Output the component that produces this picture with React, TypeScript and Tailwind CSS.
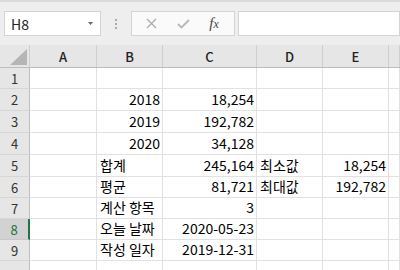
const cols = [
  { key: 'A', w: 'w-[67px]' },
  { key: 'B', w: 'w-[66px]' },
  { key: 'C', w: 'w-[94px]' },
  { key: 'D', w: 'w-[66px]' },
  { key: 'E', w: 'w-[66px]' },
  { key: 'F', w: 'flex-1' },
];

type Cell = { v: string; right?: boolean };

const rows: { n: number; h: string; cells: Record<string, Cell> }[] = [
  { n: 1, h: 'h-[21px]', cells: {} },
  { n: 2, h: 'h-[22px]', cells: { B: { v: '2018', right: true }, C: { v: '18,254', right: true } } },
  { n: 3, h: 'h-[22px]', cells: { B: { v: '2019', right: true }, C: { v: '192,782', right: true } } },
  { n: 4, h: 'h-[22px]', cells: { B: { v: '2020', right: true }, C: { v: '34,128', right: true } } },
  {
    n: 5,
    h: 'h-[22px]',
    cells: { B: { v: '합계' }, C: { v: '245,164', right: true }, D: { v: '최소값' }, E: { v: '18,254', right: true } },
  },
  {
    n: 6,
    h: 'h-[21px]',
    cells: { B: { v: '평균' }, C: { v: '81,721', right: true }, D: { v: '최대값' }, E: { v: '192,782', right: true } },
  },
  { n: 7, h: 'h-[21px]', cells: { B: { v: '계산 항목' }, C: { v: '3', right: true } } },
  { n: 8, h: 'h-[21px]', cells: { B: { v: '오늘 날짜' }, C: { v: '2020-05-23', right: true } } },
  { n: 9, h: 'h-[21px]', cells: { B: { v: '작성 일자' }, C: { v: '2019-12-31', right: true } } },
  { n: 10, h: 'h-[21px]', cells: {} },
];

const font = "font-['Noto_Sans_CJK_KR','Noto_Sans',sans-serif]";

export default function App() {
  return (
    <div className={`flex h-[270px] w-[400px] flex-col overflow-hidden bg-white text-[#222] ${font}`}>
      <FormulaBar />
      <div className="flex h-[23px] shrink-0 border-b border-[#bdbdbd] bg-[#e6e6e6]">
        <div className="flex w-[30px] shrink-0 items-end justify-end border-r border-[#cfcfcf] pb-[2px] pr-[2px]">
          <svg width="17" height="16" viewBox="0 0 17 16">
            <path d="M17 0 L17 16 L0 16 Z" fill="#b5b5b5" />
          </svg>
        </div>
        {cols.map((c) => (
          <div
            key={c.key}
            className={`${c.w} flex shrink-0 items-center justify-center border-r border-[#cfcfcf] text-[13px] font-medium leading-none text-[#222]`}
          >
            {c.key !== 'F' && c.key}
          </div>
        ))}
      </div>
      {rows.map((r) => {
        const active = r.n === 8;
        return (
          <div key={r.n} className={`flex ${r.h} shrink-0`}>
            <div
              className={[
                'flex w-[30px] shrink-0 items-center justify-center border-b text-[13px] leading-none',
                active
                  ? 'border-r-2 border-b-[#c8c8c8] border-r-[#217346] bg-[#d2d2d2] text-[#217346]'
                  : 'border-r border-b-[#d6d6d6] border-r-[#bdbdbd] bg-[#e6e6e6] text-[#333]',
              ].join(' ')}
            >
              {r.n < 10 && r.n}
            </div>
            {cols.map((c) => {
              const cell = r.cells[c.key];
              return (
                <div
                  key={c.key}
                  className={[
                    c.w,
                    'flex shrink-0 items-end overflow-visible whitespace-nowrap border-r border-b border-[#e1e1e1] pb-[1px] text-[14px] leading-[19px] text-black',
                    cell?.right ? 'justify-end pr-[2px]' : 'justify-start pl-[3px]',
                  ].join(' ')}
                >
                  {cell?.v}
                </div>
              );
            })}
          </div>
        );
      })}
    </div>
  );
}

function FormulaBar() {
  return (
    <div className="flex h-[45px] shrink-0 flex-col bg-[#eeeeee]">
      <div className="h-[2px] bg-[#dadada]" />
      <div className="mt-[9px] flex h-[25px] items-stretch pl-[4px]">
        <div className="flex w-[97px] items-center justify-between border border-[#d4d4d4] bg-white pl-[6px] pr-[7px]">
          <span className="text-[14px] leading-none text-[#222]">H8</span>
          <svg width="5" height="3" viewBox="0 0 5 3">
            <path d="M0 0 L5 0 L2.5 3 Z" fill="#666" />
          </svg>
        </div>
        <div className="flex w-[30px] flex-col items-center justify-center gap-[2px]">
          <span className="h-[2px] w-[2px] bg-[#aaaaaa]" />
          <span className="h-[2px] w-[2px] bg-[#aaaaaa]" />
          <span className="h-[2px] w-[2px] bg-[#aaaaaa]" />
        </div>
        <div className="flex w-[104px] items-center border border-[#d4d4d4] bg-[#fafafa]">
          <div className="flex w-[38px] justify-center">
            <svg width="11" height="11" viewBox="0 0 11 11" stroke="#a8a8a8" strokeWidth="1.1" fill="none">
              <path d="M1 1 L10 10 M10 1 L1 10" />
            </svg>
          </div>
          <div className="flex w-[26px] justify-center">
            <svg width="13" height="10" viewBox="0 0 13 10" stroke="#b8b8b8" strokeWidth="1.8" fill="none">
              <path d="M1 5 L4.5 8.5 L12 1" />
            </svg>
          </div>
          <div className="flex flex-1 justify-center pr-[2px]">
            <span className="font-['Liberation_Serif',serif] text-[15px] italic leading-none text-[#444]">
              f<span className="text-[12px]">x</span>
            </span>
          </div>
        </div>
        <div className="ml-[3px] flex-1 border border-[#d4d4d4] bg-white" />
      </div>
    </div>
  );
}
